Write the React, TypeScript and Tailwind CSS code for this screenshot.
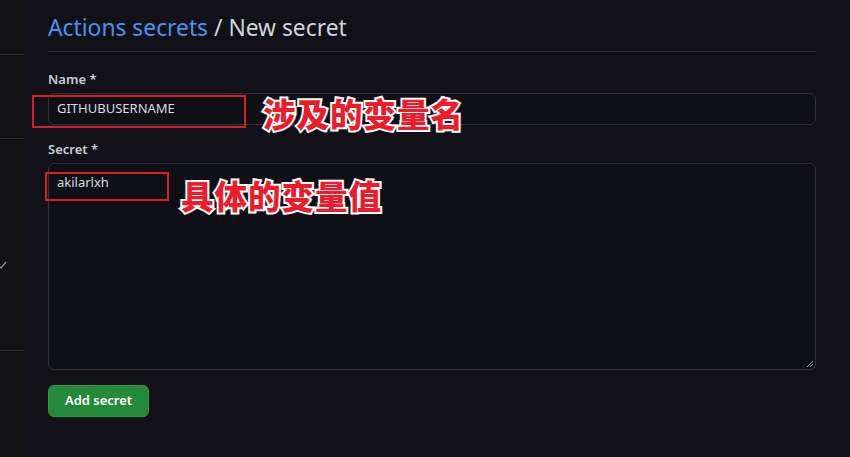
const sans = "font-['Segoe_UI','Noto_Sans','Liberation_Sans','Noto_Sans_CJK_SC',sans-serif]";
const cjk = "font-['Noto_Sans_CJK_SC',sans-serif]";

const Annotation = ({ text, className }: { text: string; className: string }) => (
  <span
    className={`absolute ${cjk} font-black text-[32.5px] leading-none tracking-[1px] text-[#ec1c2c] [-webkit-text-stroke:4px_#ffffff] [paint-order:stroke_fill] ${className}`}
  >
    {text}
  </span>
);

const App = () => {
  return (
    <div className={`relative w-[850px] h-[457px] overflow-hidden bg-[#111117] ${sans}`}>
      <div className="flex h-full">
        {/* Left column - cut off sidebar */}
        <div className="relative w-6 shrink-0 bg-[#121214]">
          <div className="absolute top-[54px] left-0 w-6 h-px bg-[#2b2b30]" />
          <div className="absolute top-[138px] left-0 w-6 h-px bg-[#2b2b30]" />
          <div className="absolute top-[350px] left-0 w-6 h-px bg-[#2b2b30]" />
          <svg className="absolute left-0 top-[257px]" width="8" height="12" viewBox="0 0 8 12">
            <path d="M-2 8 L1 11 L6 5" fill="none" stroke="#8b8f97" strokeWidth="1.2" />
          </svg>
        </div>

        {/* Right column - form */}
        <div className="ml-6 w-[768px] flex flex-col">
          <h1 className="pt-[13px] h-[52px] text-[22.8px] leading-[30px] font-normal border-b border-[#2a2b33]">
            <span className="text-[#4a92f0]">Actions secrets</span>
            <span className="text-[#d0d4da]"> / New secret</span>
          </h1>

          <label className="mt-[19px] text-[13px] leading-[16px] font-semibold text-[#c9cdd3]">Name *</label>
          <div className="mt-[6px] h-[32px] rounded-md border border-[#30313a] bg-[#0f0f16] px-2 flex items-center text-[13px] text-[#d7dbe0]">
            GITHUBUSERNAME
          </div>

          <label className="mt-[16px] text-[13px] leading-[16px] font-semibold text-[#c9cdd3]">Secret *</label>
          <div className="relative mt-[6px] h-[207px] rounded-md border border-[#30313a] bg-[#0f0f16] px-2 pt-[10px] text-[13px] leading-[16px] text-[#d7dbe0]">
            akilarlxh
            <svg className="absolute right-[1px] bottom-[1px]" width="10" height="10" viewBox="0 0 10 10">
              <path d="M9 3 L3 9 M9 6 L6 9" stroke="#9a9ca3" strokeWidth="1" />
            </svg>
          </div>

          <button className="mt-[15px] w-[101px] h-[32px] rounded-md bg-[#238a3a] border border-[#2c9a45] text-white text-[13px] font-semibold">
            Add secret
          </button>
        </div>
      </div>

      {/* Red annotation boxes */}
      <div className="absolute left-[32px] top-[95px] w-[214px] h-[33px] border-2 border-[#d71d28]" />
      <div className="absolute left-[45px] top-[172px] w-[124px] h-[29px] border-2 border-[#d71d28]" />
      <Annotation text="涉及的变量名" className="left-[263px] top-[97px]" />
      <Annotation text="具体的变量值" className="left-[181px] top-[179px]" />
    </div>
  );
};

export default App;
